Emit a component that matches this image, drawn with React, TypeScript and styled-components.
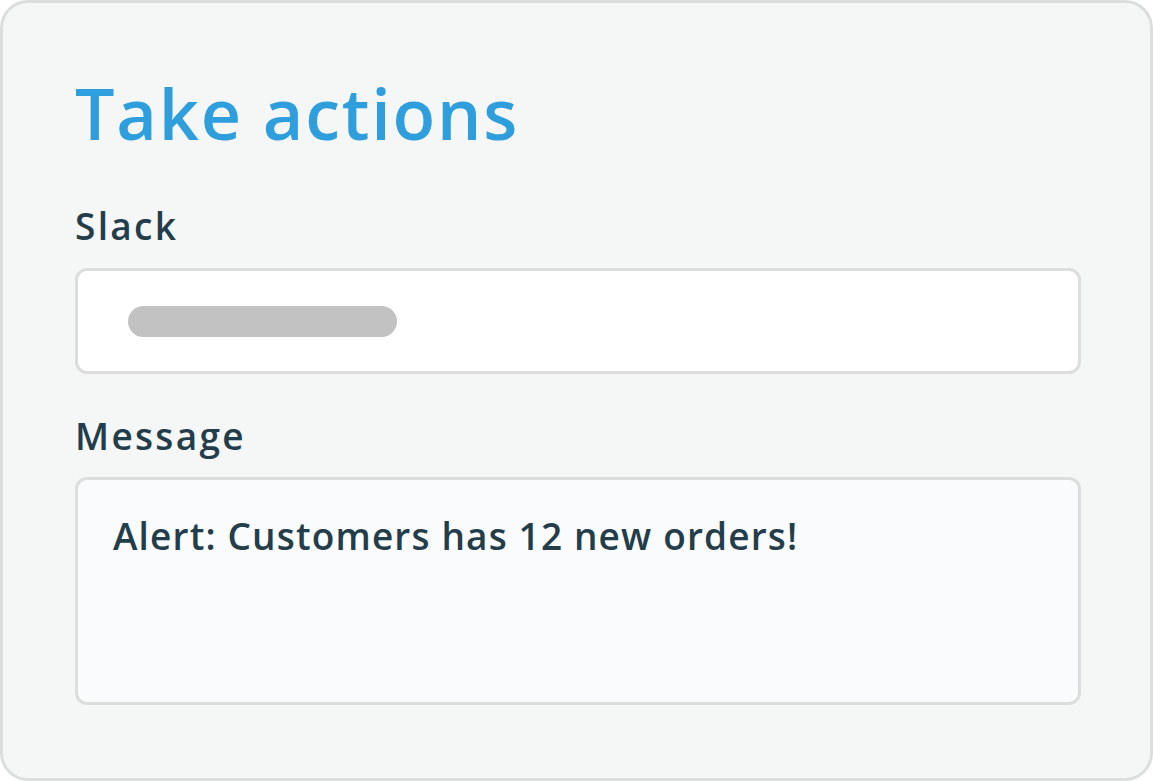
import React from "react";
import styled, {createGlobalStyle} from "styled-components";

const GlobalStyle = createGlobalStyle`
  html, body {
    margin: 0;
    padding: 0;
    background: #ffffff;
  }

  * {
    box-sizing: border-box;
  }
`;

const Card = styled.div`
  width: 1153px;
  height: 781px;
  background: #f5f6f6;
  border: 3px solid #dcdede;
  border-radius: 28px;
  padding: 65px 72px 0 72px;
  font-family: "Open Sans", "Noto Sans", sans-serif;
  display: flex;
  flex-direction: column;
`;

const Title = styled.h1`
  margin: 0;
  font-size: 70px;
  line-height: 90px;
  font-weight: 600;
  letter-spacing: 1.8px;
  color: #2e9edc;
`;

const Label = styled.label<{$gap: number}>`
  display: block;
  font-size: 37px;
  line-height: 44px;
  font-weight: 600;
  letter-spacing: 2.3px;
  color: #233d4b;
  margin-top: ${({$gap}) => $gap}px;
`;

const Field = styled.div<{$tall?: boolean}>`
  margin-top: ${({$tall}) => ($tall ? 19 : 20)}px;
  width: 1006px;
  height: ${({$tall}) => ($tall ? 228 : 106)}px;
  background: ${({$tall}) => ($tall ? "#fafbfc" : "#ffffff")};
  border: 3px solid #dcdede;
  border-radius: 12px;
  display: flex;
  align-items: ${({$tall}) => ($tall ? "flex-start" : "center")};
  padding: ${({$tall}) => ($tall ? "34px 35px" : "0 50px")};
`;

const Placeholder = styled.span`
  display: block;
  width: 269px;
  height: 31px;
  border-radius: 16px;
  background: #c2c2c2;
`;

const MessageText = styled.p`
  margin: 0;
  font-size: 37px;
  line-height: 44px;
  font-weight: 600;
  letter-spacing: 1.15px;
  color: #233d4b;
`;

export default function App() {
    return (
        <>
            <GlobalStyle/>
            <Card>
                <Title>Take actions</Title>
                <Label $gap={46}>Slack</Label>
                <Field>
                    <Placeholder/>
                </Field>
                <Label $gap={40}>Message</Label>
                <Field $tall>
                    <MessageText>Alert: Customers has 12 new orders!</MessageText>
                </Field>
            </Card>
        </>
    );
}
